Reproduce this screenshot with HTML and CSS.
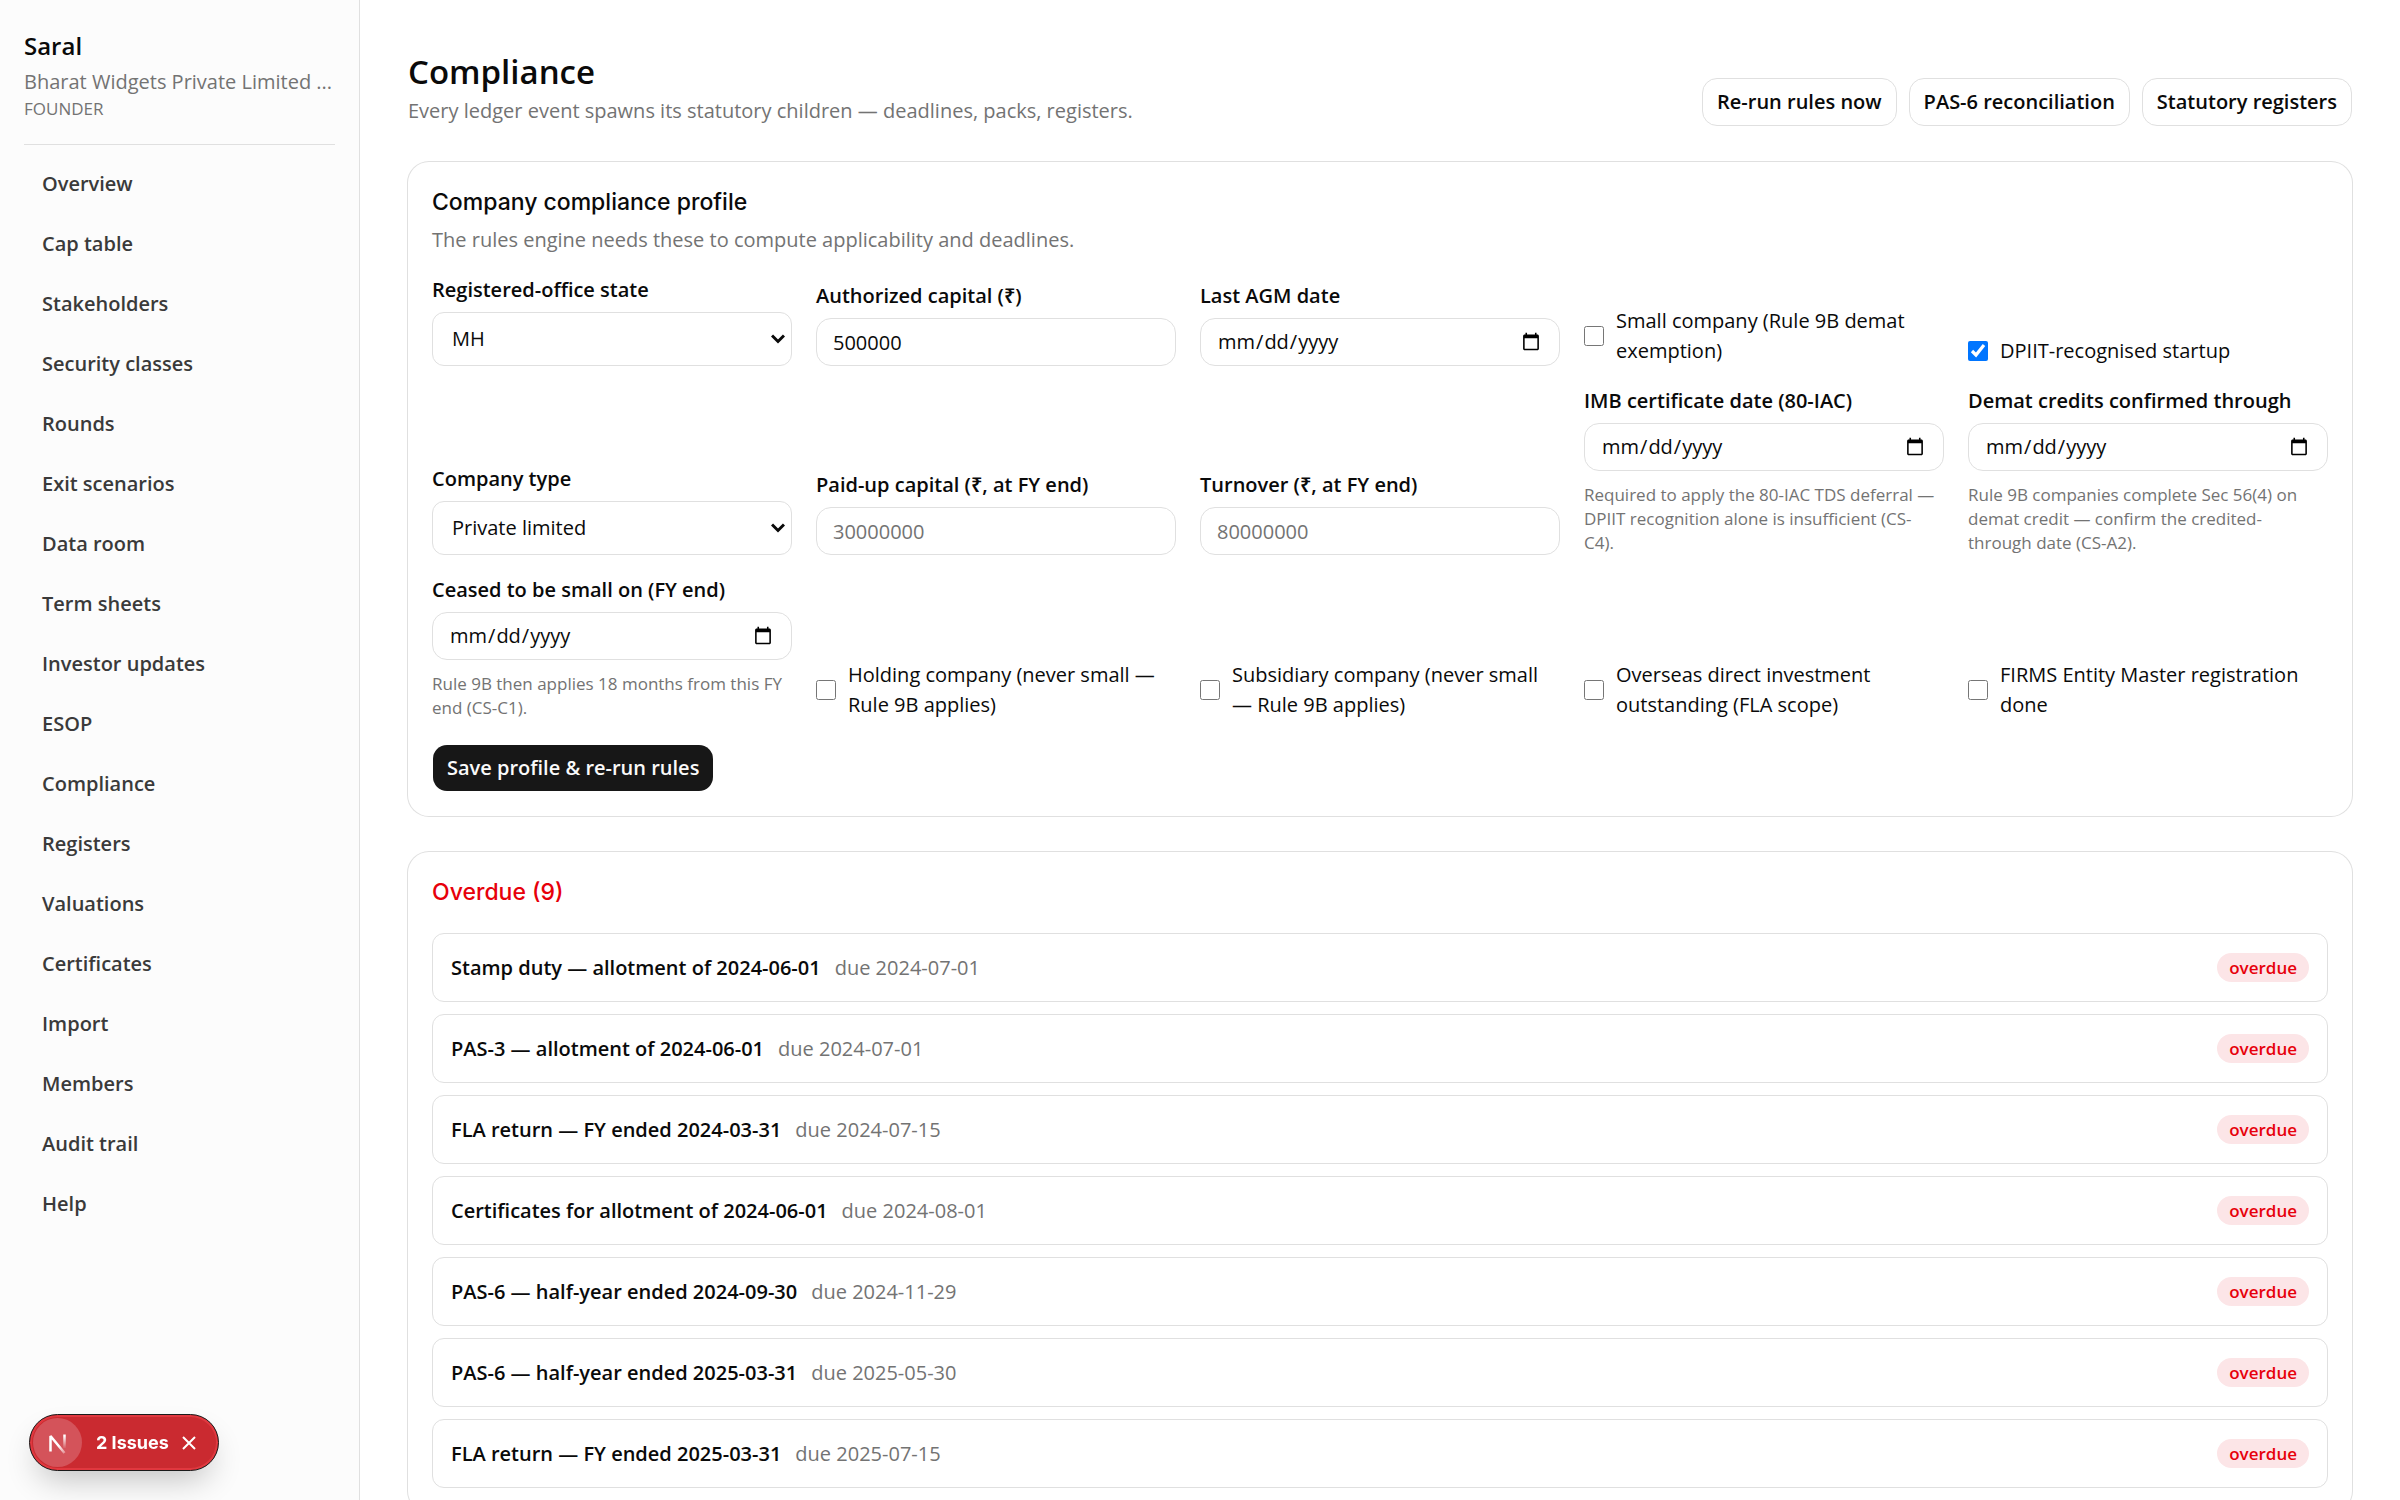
FILE: index.html
```html
<!DOCTYPE html>
<html lang="en">

<head>
    <meta charset="UTF-8">
    <meta name="viewport" content="width=device-width, initial-scale=1.0">
    <title>Compliance - Saral</title>
    <link rel="stylesheet" href="styles.css">
</head>

<body>
    <div class="shell">
        <aside class="sidebar">
            <div class="brand">
                <div class="brand-name">Saral</div>
                <div class="brand-company">Bharat Widgets Private Limited ...</div>
                <div class="brand-role">FOUNDER</div>
            </div>
            <nav class="nav">
                <a href="#">Overview</a>
                <a href="#">Cap table</a>
                <a href="#">Stakeholders</a>
                <a href="#">Security classes</a>
                <a href="#">Rounds</a>
                <a href="#">Exit scenarios</a>
                <a href="#">Data room</a>
                <a href="#">Term sheets</a>
                <a href="#">Investor updates</a>
                <a href="#">ESOP</a>
                <a href="#">Compliance</a>
                <a href="#">Registers</a>
                <a href="#">Valuations</a>
                <a href="#">Certificates</a>
                <a href="#">Import</a>
                <a href="#">Members</a>
                <a href="#">Audit trail</a>
                <a href="#">Help</a>
            </nav>
        </aside>

        <main class="main">
            <header class="page-header">
                <div>
                    <h1>Compliance</h1>
                    <p class="muted">Every ledger event spawns its statutory children — deadlines, packs, registers.</p>
                </div>
                <div class="actions">
                    <button class="btn" type="button">Re-run rules now</button>
                    <a class="btn" href="#">PAS-6 reconciliation</a>
                    <a class="btn" href="#">Statutory registers</a>
                </div>
            </header>

            <section class="card">
                <div class="card-header">
                    <h2>Company compliance profile</h2>
                    <p class="muted">The rules engine needs these to compute applicability and deadlines.</p>
                </div>
                <form class="profile-form">
                    <div class="field">
                        <label for="state">Registered-office state</label>
                        <select id="state">
                            <option>MH</option>
                            <option>KA</option>
                            <option>DL</option>
                        </select>
                    </div>
                    <div class="field">
                        <label for="authorized">Authorized capital (₹)</label>
                        <input id="authorized" type="text" value="500000">
                    </div>
                    <div class="field">
                        <label for="agm">Last AGM date</label>
                        <input id="agm" type="date">
                    </div>
                    <label class="check">
                        <input type="checkbox">
                        <span>Small company (Rule 9B demat exemption)</span>
                    </label>
                    <label class="check">
                        <input type="checkbox" checked>
                        <span>DPIIT-recognised startup</span>
                    </label>

                    <div class="field">
                        <label for="type">Company type</label>
                        <select id="type">
                            <option>Private limited</option>
                            <option>Public limited</option>
                        </select>
                    </div>
                    <div class="field">
                        <label for="paidup">Paid-up capital (₹, at FY end)</label>
                        <input id="paidup" type="text" placeholder="30000000">
                    </div>
                    <div class="field">
                        <label for="turnover">Turnover (₹, at FY end)</label>
                        <input id="turnover" type="text" placeholder="80000000">
                    </div>
                    <div class="field">
                        <label for="imb">IMB certificate date (80-IAC)</label>
                        <input id="imb" type="date">
                        <p class="hint">Required to apply the 80-IAC TDS deferral — DPIIT recognition alone is insufficient (CS-C4).</p>
                    </div>
                    <div class="field">
                        <label for="demat">Demat credits confirmed through</label>
                        <input id="demat" type="date">
                        <p class="hint">Rule 9B companies complete Sec 56(4) on demat credit — confirm the credited-through date (CS-A2).</p>
                    </div>

                    <div class="field">
                        <label for="ceased">Ceased to be small on (FY end)</label>
                        <input id="ceased" type="date">
                        <p class="hint">Rule 9B then applies 18 months from this FY end (CS-C1).</p>
                    </div>
                    <label class="check">
                        <input type="checkbox">
                        <span>Holding company (never small — Rule 9B applies)</span>
                    </label>
                    <label class="check">
                        <input type="checkbox">
                        <span>Subsidiary company (never small — Rule 9B applies)</span>
                    </label>
                    <label class="check">
                        <input type="checkbox">
                        <span>Overseas direct investment outstanding (FLA scope)</span>
                    </label>
                    <label class="check">
                        <input type="checkbox">
                        <span>FIRMS Entity Master registration done</span>
                    </label>

                    <button class="btn btn-primary" type="submit">Save profile &amp; re-run rules</button>
                </form>
            </section>

            <section class="card">
                <h2 class="overdue-title">Overdue (9)</h2>
                <ul class="items">
                    <li><div><strong>Stamp duty — allotment of 2024-06-01</strong><span class="due">due 2024-07-01</span></div><span class="badge">overdue</span></li>
                    <li><div><strong>PAS-3 — allotment of 2024-06-01</strong><span class="due">due 2024-07-01</span></div><span class="badge">overdue</span></li>
                    <li><div><strong>FLA return — FY ended 2024-03-31</strong><span class="due">due 2024-07-15</span></div><span class="badge">overdue</span></li>
                    <li><div><strong>Certificates for allotment of 2024-06-01</strong><span class="due">due 2024-08-01</span></div><span class="badge">overdue</span></li>
                    <li><div><strong>PAS-6 — half-year ended 2024-09-30</strong><span class="due">due 2024-11-29</span></div><span class="badge">overdue</span></li>
                    <li><div><strong>PAS-6 — half-year ended 2025-03-31</strong><span class="due">due 2025-05-30</span></div><span class="badge">overdue</span></li>
                    <li><div><strong>FLA return — FY ended 2025-03-31</strong><span class="due">due 2025-07-15</span></div><span class="badge">overdue</span></li>
                </ul>
            </section>
        </main>
    </div>

    <div class="issues">
        <button class="issues-logo" type="button" aria-label="Open dev tools">
            <svg width="24" height="24" viewBox="0 0 24 24" fill="none" stroke-width="3">
                <defs>
                    <linearGradient id="fade-diag" gradientUnits="userSpaceOnUse" x1="14" y1="14" x2="20" y2="22">
                        <stop stop-color="#fff" />
                        <stop offset="1" stop-color="#fff" stop-opacity="0.3" />
                    </linearGradient>
                    <linearGradient id="fade-bar" gradientUnits="userSpaceOnUse" x1="18" y1="5" x2="18" y2="18">
                        <stop stop-color="#fff" />
                        <stop offset="1" stop-color="#fff" stop-opacity="0" />
                    </linearGradient>
                </defs>
                <path d="M4.500 20.500V5L18.500 22" stroke="url(#fade-diag)" stroke-width="2.500" stroke-linejoin="bevel" />
                <path d="M18.500 3.500V17" stroke="url(#fade-bar)" stroke-width="2.500" />
            </svg>
        </button>
        <button class="issues-label" type="button">2 Issues</button>
        <button class="issues-close" type="button" aria-label="Hide issues">
            <svg width="14" height="14" viewBox="0 0 14 14" stroke="#fff" stroke-width="2">
                <path d="M1 1L13 13M13 1L1 13" />
            </svg>
        </button>
    </div>
</body>

</html>
```
FILE: styles.css
```css
* {
    box-sizing: border-box;
}

body {
    margin: 0;
    background-color: #fff;
    color: #0a0a0a;
    font-family: "Open Sans", "Noto Sans", sans-serif;
    font-size: 20px;
    line-height: 30px;
}

h1, h2, p, ul {
    margin: 0;
    padding: 0;
}

a {
    color: inherit;
    text-decoration: none;
}

button, input, select {
    font: inherit;
    color: inherit;
}

.shell {
    display: flex;
    height: 100vh;
}

/* sidebar */

.sidebar {
    flex: none;
    width: 360px;
    padding: 24px;
    background-color: #fcfcfc;
    border-right: 1px solid #e0e0e0;
}

.brand {
    padding-bottom: 23px;
    border-bottom: 1px solid #e0e0e0;
}

.brand-name {
    font-size: 24px;
    font-weight: 600;
    line-height: 43px;
}

.brand-company {
    color: #737373;
    white-space: nowrap;
    overflow: hidden;
    text-overflow: ellipsis;
}

.brand-role {
    color: #737373;
    font-size: 17px;
    line-height: 24px;
}

.nav {
    display: flex;
    flex-direction: column;
    gap: 6px;
    margin-top: 12px;
}

.nav a {
    padding: 12px 18px;
    color: #3a3a3a;
    font-weight: 600;
}

/* main column */

.main {
    flex: 1;
    min-width: 0;
    display: flex;
    flex-direction: column;
    gap: 36px;
    padding: 48px;
    overflow-y: auto;
    scrollbar-width: none;
}

.muted {
    color: #737373;
}

.page-header {
    display: flex;
    justify-content: space-between;
    align-items: flex-end;
}

h1 {
    font-size: 33px;
    font-weight: 600;
    line-height: 48px;
}

.actions {
    display: flex;
    gap: 12px;
}

.btn {
    display: inline-flex;
    align-items: center;
    height: 48px;
    padding: 0 14px;
    background-color: #fff;
    border: 1px solid #e0e0e0;
    border-radius: 15px;
    font-weight: 600;
    white-space: nowrap;
}

.btn-primary {
    justify-self: start;
    background-color: #171717;
    background-clip: padding-box;
    border-color: transparent;
    color: #fafafa;
}

.card {
    flex: none;
    display: flex;
    flex-direction: column;
    gap: 24px;
    padding: 24px;
    border-radius: 21px;
    box-shadow: 0 0 0 1px #e0e0e0;
}

.card-header {
    display: flex;
    flex-direction: column;
    gap: 6px;
}

h2 {
    font-family: Inter, sans-serif;
    font-size: 23px;
    font-weight: 500;
    line-height: 33px;
}

/* profile form */

.profile-form {
    display: grid;
    grid-template-columns: repeat(5, 1fr);
    gap: 24px;
    align-items: end;
}

.field {
    display: flex;
    flex-direction: column;
    gap: 12px;
}

.field label {
    font-weight: 600;
    line-height: 21px;
}

.field input,
.field select {
    width: 100%;
    height: 48px;
    padding: 0 16px;
    background-color: #fff;
    border: 1px solid #e0e0e0;
    border-radius: 15px;
}

.field select {
    height: 54px;
    padding: 0 19px;
    border-radius: 12px;
    appearance: none;
    background: url("data:image/svg+xml,%3Csvg xmlns='http://www.w3.org/2000/svg' width='14' height='10' fill='none' stroke='%230a0a0a' stroke-width='3'%3E%3Cpath d='M1 1.500L7 7.500L13 1.500'/%3E%3C/svg%3E") no-repeat right 6px center;
}

.field input::placeholder {
    color: #737373;
    opacity: 1;
}

.field input::-webkit-calendar-picker-indicator {
    width: 20px;
    height: 20px;
}

.hint {
    padding-right: 6px;
    color: #737373;
    font-size: 17px;
    line-height: 24px;
}

.check {
    display: flex;
    align-items: center;
    gap: 12px;
}

.check input {
    flex: none;
    width: 20px;
    height: 20px;
    margin: 0;
}

/* overdue list */

.overdue-title {
    color: #e7000b;
}

.items {
    display: flex;
    flex-direction: column;
    gap: 12px;
    list-style: none;
}

.items li {
    display: flex;
    justify-content: space-between;
    align-items: center;
    padding: 18px;
    border: 1px solid #e0e0e0;
    border-radius: 12px;
    line-height: 31px;
}

.items strong {
    font-weight: 600;
}

.due {
    margin-left: 14px;
    color: #737373;
}

.badge {
    padding: 0 12px;
    background-color: #fce5e7;
    border-radius: 15px;
    color: #e7000b;
    font-size: 17px;
    font-weight: 600;
    line-height: 29px;
}

/* floating issues pill */

.issues {
    position: fixed;
    left: 29px;
    bottom: 29px;
    display: flex;
    align-items: center;
    padding: 3px;
    background-color: #ca2a30;
    border: 1px solid #1a1a1a;
    border-radius: 29px;
    box-shadow: inset 0 0 0 2px #e0383f, 0 16px 32px -8px rgba(0, 0, 0, 0.24);
    color: #fff;
}

.issues button {
    display: flex;
    align-items: center;
    justify-content: center;
    padding: 0;
    background: none;
    border: none;
}

.issues .issues-logo {
    width: 49px;
    height: 49px;
    background-color: #d4535a;
    border-radius: 50%;
}

.issues .issues-label {
    margin-left: 14px;
    font-family: Inter, sans-serif;
    font-size: 18px;
    font-weight: 700;
}

.issues .issues-close {
    margin: 0 19px 0 13px;
}
```
